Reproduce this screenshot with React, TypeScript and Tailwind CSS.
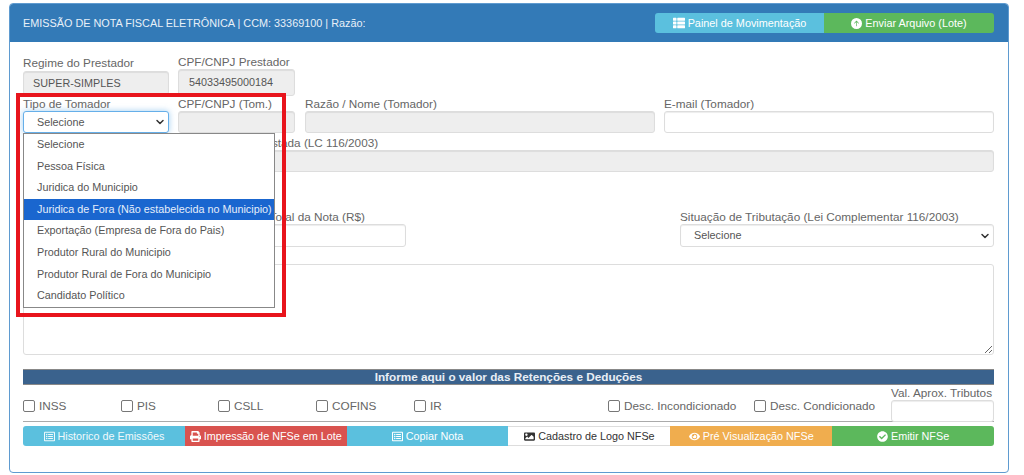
import { ChevronDown } from 'lucide-react';
import { FaCheckCircle, FaEye, FaImage, FaPrint, FaRegListAlt, FaThList } from 'react-icons/fa';
import { BsArrowUpCircleFill } from 'react-icons/bs';

const options = [
  'Selecione',
  'Pessoa Física',
  'Juridica do Municipio',
  'Juridica de Fora (Não estabelecida no Municipio)',
  'Exportação (Empresa de Fora do Pais)',
  'Produtor Rural do Municipio',
  'Produtor Rural de Fora do Municipio',
  'Candidato Político',
];

const retencoes = [
  { label: 'INSS', width: 'w-[98px]' },
  { label: 'PIS', width: 'w-[97px]' },
  { label: 'CSLL', width: 'w-[98px]' },
  { label: 'COFINS', width: 'w-[98px]' },
  { label: 'IR', width: 'w-[194px]' },
];

const inputBase = 'h-[22px] rounded-[3px] border border-[#ddd] shadow-[inset_0_1px_1px_rgba(0,0,0,0.075)]';
const disabled = `${inputBase} bg-[#eee]`;
const labelText = 'block h-[15px] text-[11.75px] leading-[15px] text-[#666] whitespace-nowrap';

function Check({ label, className }: { label: string; className?: string }) {
  return (
    <div className={`flex items-center gap-[4px] ${className ?? ''}`}>
      <span className="h-[12px] w-[12px] rounded-[2px] border border-[#777] bg-white" />
      <span className="text-[11.75px] leading-[15px] text-[#666]">{label}</span>
    </div>
  );
}

export default function App() {
  return (
    <div className="h-[475px] w-[1024px] overflow-hidden bg-white pt-[3px] pl-[9px] font-['Liberation_Sans',Arial,sans-serif]">
      <div className="relative h-[470px] w-[1000px] rounded-[4px] border border-[#5f9bd0] bg-white">
        {/* Heading */}
        <div className="flex h-[38px] items-center justify-between rounded-t-[3px] bg-[#337ab7] pr-[14px] pl-[13px]">
          <span className="text-[10.85px] text-[#e8f0f7]">EMISSÃO DE NOTA FISCAL ELETRÔNICA | CCM: 33369100 | Razão:</span>
          <div className="flex h-[20px] text-[10.85px] text-white">
            <div className="flex w-[169px] items-center justify-center gap-[3px] rounded-l-[3px] bg-[#5bc0de]">
              <FaThList className="h-[12px] w-[12px]" />
              Painel de Movimentação
            </div>
            <div className="flex w-[170px] items-center justify-center gap-[3px] rounded-r-[3px] bg-[#5cb85c]">
              <BsArrowUpCircleFill className="h-[11px] w-[11px]" />
              Enviar Arquivo (Lote)
            </div>
          </div>
        </div>

        {/* Form */}
        <div className="pt-[12px] pr-[14px] pl-[13px]">
          <div className="flex h-[42px] gap-[9px]">
            <div className="w-[146px]">
              <label className={`${labelText} mt-[1px]`}>Regime do Prestador</label>
              <div className={`${disabled} mt-[1px] flex h-[24px] items-center pl-[9px] text-[10.8px] text-[#555]`}>SUPER-SIMPLES</div>
            </div>
            <div className="w-[117px]">
              <label className={labelText}>CPF/CNPJ Prestador</label>
              <div className={`${disabled} flex h-[27px] items-center pl-[10px] text-[10.8px] text-[#555]`}>54033495000184</div>
            </div>
          </div>

          <div className="flex">
            <div className="relative z-10 w-[146px]">
              <label className={labelText}>Tipo de Tomador</label>
              <div className="flex h-[22px] items-center justify-between rounded-[3px] border border-[#66afe9] bg-white pr-[2px] pl-[13px] text-[10.8px] text-[#555] shadow-[0_0_6px_rgba(102,175,233,0.6)]">
                Selecione
                <ChevronDown className="h-[12px] w-[12px] text-[#333]" strokeWidth={3} />
              </div>
              {/* Open select list */}
              <ul className="absolute top-[37px] left-0 w-[252px] border border-[#888] bg-white text-[10.8px] text-[#555]">
                {options.map((option) => (
                  <li
                    key={option}
                    className={`h-[21.6px] pl-[13px] leading-[21px] whitespace-nowrap ${option.startsWith('Juridica de Fora') ? 'bg-[#1a66cf] text-[#e6eefa]' : ''}`}
                  >
                    {option}
                  </li>
                ))}
              </ul>
            </div>
            <div className="ml-[9px] w-[117px]">
              <label className={labelText}>CPF/CNPJ (Tom.)</label>
              <div className={disabled} />
            </div>
            <div className="ml-[10px] w-[350px]">
              <label className={labelText}>Razão / Nome (Tomador)</label>
              <div className={disabled} />
            </div>
            <div className="ml-[9px] w-[330px]">
              <label className={labelText}>E-mail (Tomador)</label>
              <div className={`${inputBase} bg-white`} />
            </div>
          </div>

          <div className="mt-[2px]">
            <label className={`${labelText} pl-[179px]`}>Atividade Prestada (LC 116/2003)</label>
            <div className={disabled} />
          </div>

          <div className="mt-[37px] flex items-start justify-between">
            <div className="ml-[217px] w-[166px]">
              <label className={labelText}>Valor Total da Nota (R$)</label>
              <div className={`${inputBase} h-[23px] bg-white`} />
            </div>
            <div className="w-[314px]">
              <label className={labelText}>Situação de Tributação (Lei Complementar 116/2003)</label>
              <div className={`${inputBase} flex h-[23px] items-center justify-between bg-white pr-[2px] pl-[13px] text-[10.8px] text-[#555]`}>
                Selecione
                <ChevronDown className="h-[12px] w-[12px] text-[#333]" strokeWidth={3} />
              </div>
            </div>
          </div>

          <textarea className="mt-[17px] block h-[91px] w-full rounded-[3px] border border-[#ddd] bg-white" readOnly />

          <div className="mt-[14px] h-[16px] border-y border-[#888] bg-[#3a628d] text-center text-[11.75px] leading-[14px] font-bold text-[#e8eef5]">
            Informe aqui o valor das Retenções e Deduções
          </div>

          {/* Retencoes */}
          <div className="flex h-[37px] items-start border-b border-[#aaa]">
            {retencoes.map((item) => (
              <Check key={item.label} label={item.label} className={`mt-[13px] ${item.width}`} />
            ))}
            <Check label="Desc. Incondicionado" className="mt-[13px] w-[146px]" />
            <Check label="Desc. Condicionado" className="mt-[13px] w-[137px]" />
            <div className="w-[103px]">
              <label className={labelText}>Val. Aprox. Tributos</label>
              <div className={`${inputBase} bg-white`} />
            </div>
          </div>

          {/* Actions */}
          <div className="mt-[4px] flex h-[20px] text-[10.8px] text-white">
            <div className="flex flex-1 items-center justify-center gap-[3px] rounded-l-[3px] bg-[#5bc0de] text-[#f0f9fc]">
              <FaRegListAlt className="h-[11px] w-[11px]" />
              Historico de Emissões
            </div>
            <div className="flex flex-1 items-center justify-center gap-[3px] bg-[#d9534f]">
              <FaPrint className="h-[11px] w-[11px]" />
              Impressão de NFSe em Lote
            </div>
            <div className="flex flex-1 items-center justify-center gap-[3px] bg-[#5bc0de]">
              <FaRegListAlt className="h-[11px] w-[11px]" />
              Copiar Nota
            </div>
            <div className="flex flex-1 items-center justify-center gap-[3px] border-y border-[#ddd] bg-white text-[#333]">
              <FaImage className="h-[11px] w-[11px]" />
              Cadastro de Logo NFSe
            </div>
            <div className="flex flex-1 items-center justify-center gap-[3px] bg-[#f0ad4e]">
              <FaEye className="h-[11px] w-[11px]" />
              Pré Visualização NFSe
            </div>
            <div className="flex flex-1 items-center justify-center gap-[3px] rounded-r-[3px] bg-[#5cb85c]">
              <FaCheckCircle className="h-[11px] w-[11px]" />
              Emitir NFSe
            </div>
          </div>
        </div>

        {/* Red highlight drawn over the screenshot */}
        <div className="pointer-events-none absolute top-[89px] left-[6px] z-20 h-[224px] w-[270px] border-[4px] border-[#e8141c]" />
      </div>
    </div>
  );
}
